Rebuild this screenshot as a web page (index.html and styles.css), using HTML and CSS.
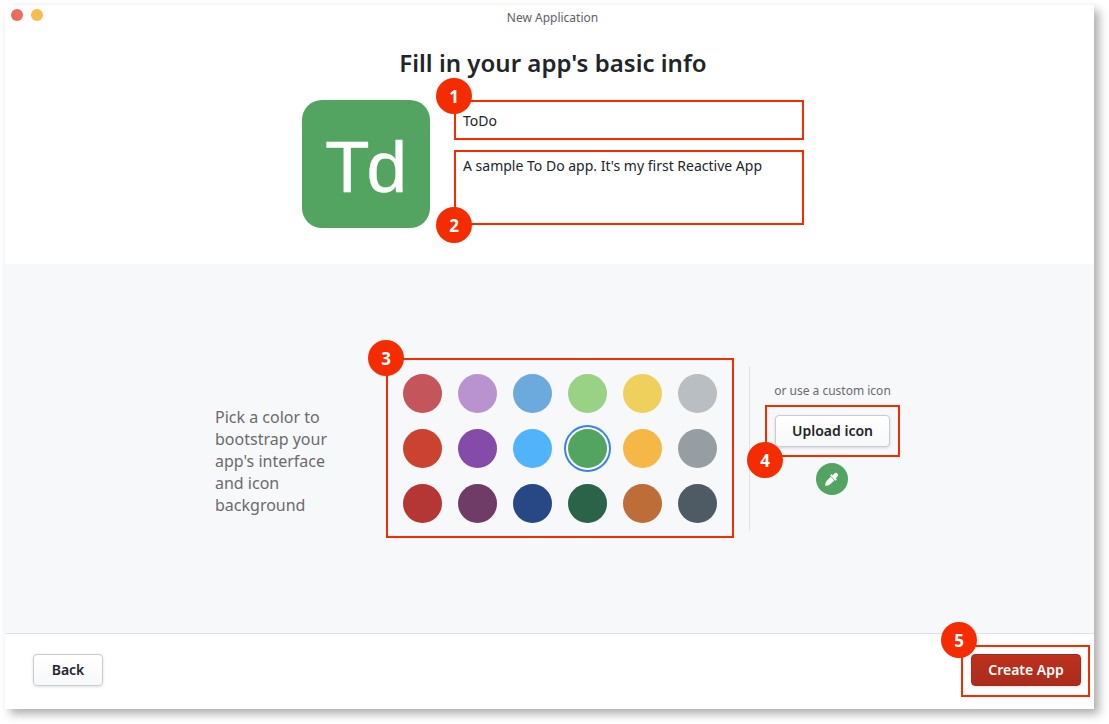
FILE: index.html
```html
<!DOCTYPE html>
<html lang="en">
<head>
<meta charset="utf-8">
<title>New Application</title>
<link rel="stylesheet" href="styles.css">
</head>
<body>
<main class="window">
  <header class="titlebar">
    <div class="lights"><span class="light close"></span><span class="light minimize"></span></div>
    <span class="window-title">New Application</span>
  </header>
  <section class="info">
    <h1 class="heading">Fill in your app's basic info</h1>
    <div class="form">
      <div class="app-icon">Td</div>
      <div class="fields">
        <div class="callout name"><span class="marker">1</span>ToDo</div>
        <div class="callout description"><span class="marker marker-bottom">2</span>A sample To Do app. It's my first Reactive App</div>
      </div>
    </div>
  </section>
  <section class="branding">
    <p class="hint">Pick a color to bootstrap your app's interface and icon background</p>
    <div class="callout palette">
      <span class="marker">3</span>
      <span class="swatch rose"></span><span class="swatch lilac"></span><span class="swatch sky"></span><span class="swatch lime"></span><span class="swatch yellow"></span><span class="swatch silver"></span>
      <span class="swatch red"></span><span class="swatch purple"></span><span class="swatch blue"></span><span class="swatch green selected"></span><span class="swatch amber"></span><span class="swatch gray"></span>
      <span class="swatch crimson"></span><span class="swatch plum"></span><span class="swatch navy"></span><span class="swatch forest"></span><span class="swatch brown"></span><span class="swatch slate"></span>
    </div>
    <div class="custom">
      <span class="custom-label">or use a custom icon</span>
      <div class="callout upload"><span class="marker marker-low">4</span><button class="button">Upload icon</button></div>
      <span class="eyedropper">
        <svg width="15" height="15" viewBox="0 0 16 16" fill="#fff"><path d="M7.1 5.1 11 9 6.3 13.2Q4.600 14.500 1.700 14.700L1.200 14.200Q1.500 11.200 2.800 9.600Z"/><path d="M6.600 3.600 8 2.300 9.200 3.400 11 1.500Q12.700 .2 14.300 1.700 15.700 3.200 14.400 4.900L12.600 6.700 13.700 7.900 12.300 9.300Z"/></svg>
      </span>
    </div>
  </section>
  <footer class="footer">
    <button class="button back">Back</button>
    <div class="callout create"><span class="marker marker-create">5</span><button class="button primary">Create App</button></div>
  </footer>
</main>
</body>
</html>
```
FILE: styles.css
```css
* { box-sizing: border-box; }
body {
  margin: 0;
  height: 724px;
  overflow: hidden;
  padding: 5px;
  background: #fff;
  color: #212529;
  font-family: "Noto Sans", sans-serif;
  font-size: 14px;
}
.window {
  display: flex;
  flex-direction: column;
  width: 1089px;
  height: 704px;
  background: #fff;
  box-shadow: 5px 5px 9px rgba(0, 0, 0, .32);
}
.titlebar {
  display: grid;
  grid-template-columns: 60px 1fr 54px;
  align-items: center;
  height: 25px;
}
.lights { display: flex; gap: 8px; padding: 0 0 5px 6px; }
.light { width: 12px; height: 12px; border-radius: 50%; }
.close { background: #ed6a5e; }
.minimize { background: #f5bd4f; }
.window-title { text-align: center; font-size: 12px; color: #606266; }
.info {
  display: flex;
  flex-direction: column;
  align-items: center;
  height: 234px;
  padding: 16px 0 0 7px;
}
.heading { margin: 0; font-size: 24px; line-height: 34px; font-weight: 600; letter-spacing: .02px; }
.form { display: flex; gap: 24px; margin-top: 20px; }
.app-icon {
  display: grid;
  place-items: center;
  width: 128px;
  height: 128px;
  padding: 5px 3px 0 0;
  border-radius: 20px;
  background: #53a361;
  color: #fff;
  font-family: "Liberation Sans", sans-serif;
  font-size: 73px;
  line-height: 84px;
  letter-spacing: -3px;
  -webkit-text-stroke: .4px #fff;
}
.fields { display: flex; flex-direction: column; gap: 10px; }
.callout { position: relative; border: 2px solid #f52c00; }
.marker {
  position: absolute;
  z-index: 1;
  left: -20px;
  top: -20px;
  display: grid;
  place-items: center;
  width: 36px;
  height: 36px;
  padding-top: 2px;
  border-radius: 50%;
  background: #f52c00;
  color: #fff;
  font-size: 17px;
  line-height: 24px;
  font-weight: 700;
}
.name { width: 350px; height: 40px; padding: 9px 7px; line-height: 20px; }
.name .marker { top: -24px; }
.description { width: 350px; height: 75px; padding: 4px 7px; line-height: 20px; }
.marker-bottom { top: 55px; }
.branding {
  display: flex;
  align-items: flex-start;
  height: 370px;
  padding: 94px 0 0 210px;
  background: #f7f8fa;
  border-bottom: 1px solid #dee2e6;
}
.hint { width: 125px; margin: 48px 46px 0 0; font-size: 16px; line-height: 22px; color: #6a6b6d; }
.palette {
  display: grid;
  grid-template-columns: repeat(6, 39px);
  gap: 16px;
  width: 348px;
  height: 180px;
  padding: 14px 15px 13px;
}
.swatch { width: 39px; height: 39px; border-radius: 50%; }
.rose { background: #c4565b; }
.lilac { background: #b893d0; }
.sky { background: #6ca9dd; }
.lime { background: #99d185; }
.yellow { background: #f0d05d; }
.silver { background: #b8bec2; }
.red { background: #cb4230; }
.purple { background: #844ba8; }
.blue { background: #51b3fa; }
.green { background: #53a361; }
.amber { background: #f5b847; }
.gray { background: #969ea4; }
.crimson { background: #b43735; }
.plum { background: #6f3b67; }
.navy { background: #274885; }
.forest { background: #2a6347; }
.brown { background: #bd6d37; }
.slate { background: #4e5b65; }
.selected { box-shadow: 0 0 0 2px #fff, 0 0 0 4px #3a80ee; }
.custom {
  display: flex;
  flex-direction: column;
  align-items: center;
  width: 151px;
  height: 165px;
  margin: 8px 0 0 15px;
  padding: 16px 0 0 15px;
  border-left: 1px solid #dee2e6;
}
.custom-label { font-size: 12px; line-height: 17px; color: #6a6b6d; white-space: nowrap; }
.upload { width: 135px; height: 52px; margin-top: 6px; padding: 8px; }
.marker-low { top: 35px; }
.button {
  display: block;
  width: 115px;
  height: 32px;
  padding: 0;
  border: 1px solid #c8cbd0;
  border-radius: 4px;
  background: linear-gradient(#fff, #f7f8fa);
  box-shadow: 0 1px 3px rgba(0, 0, 0, .13);
  color: #212529;
  font: 600 14px/20px "Noto Sans", sans-serif;
}
.eyedropper {
  display: grid;
  place-items: center;
  width: 32px;
  height: 32px;
  margin: 6px 2px 0 0;
  border-radius: 50%;
  background: #53a361;
}
.footer {
  display: flex;
  justify-content: space-between;
  padding: 11px 4px 0 28px;
}
.back { width: 70px; margin-top: 9px; }
.create { width: 129px; height: 52px; padding: 7px; padding-left: 8px; }
.marker-create { top: -25px; left: -22px; }
.primary {
  width: 110px;
  border-color: #a32a1b;
  background: linear-gradient(#bd311d, #aa2c1c);
  color: #fff;
}
```
